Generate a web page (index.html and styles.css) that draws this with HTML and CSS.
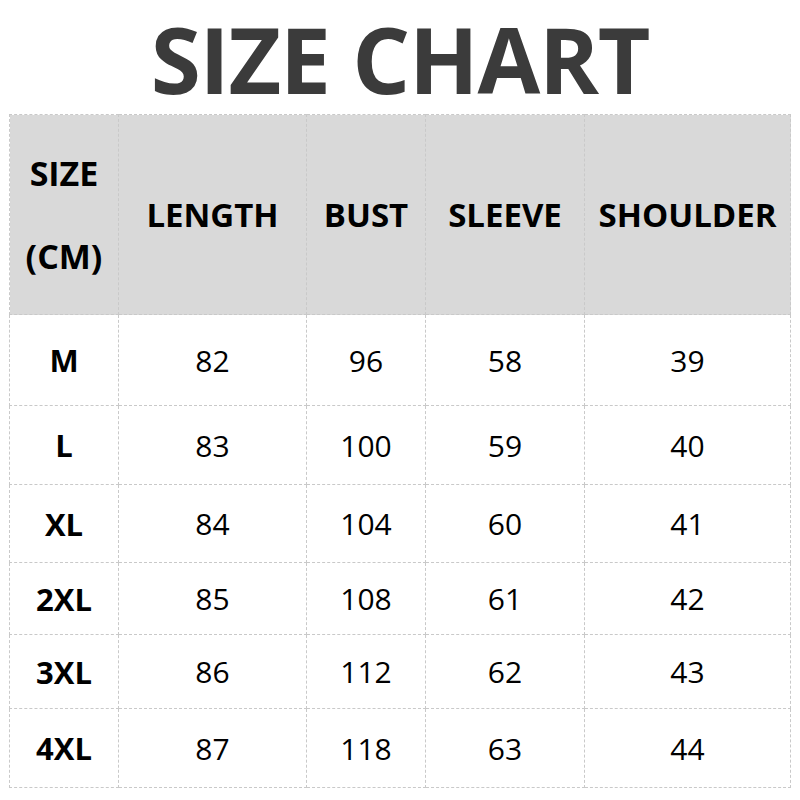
FILE: index.html
```html
<!DOCTYPE html>
<html>
<head>
<meta charset="utf-8">
<link rel="stylesheet" href="styles.css">
</head>
<body>
<div class="page">
  <h1 class="title">SIZE CHART</h1>
  <table class="chart">
    <colgroup>
      <col class="c1"><col class="c2"><col class="c3"><col class="c4"><col class="c5">
    </colgroup>
    <thead>
      <tr class="head">
        <th class="size-head"><span class="line">SIZE</span><span class="line">(CM)</span></th>
        <th>LENGTH</th>
        <th>BUST</th>
        <th>SLEEVE</th>
        <th>SHOULDER</th>
      </tr>
    </thead>
    <tbody>
      <tr class="r1"><td class="size">M</td><td>82</td><td>96</td><td>58</td><td>39</td></tr>
      <tr class="r2"><td class="size">L</td><td>83</td><td>100</td><td>59</td><td>40</td></tr>
      <tr class="r3"><td class="size">XL</td><td>84</td><td>104</td><td>60</td><td>41</td></tr>
      <tr class="r4"><td class="size">2XL</td><td>85</td><td>108</td><td>61</td><td>42</td></tr>
      <tr class="r5"><td class="size">3XL</td><td>86</td><td>112</td><td>62</td><td>43</td></tr>
      <tr class="r6"><td class="size">4XL</td><td>87</td><td>118</td><td>63</td><td>44</td></tr>
    </tbody>
  </table>
</div>
</body>
</html>
```

FILE: styles.css
```css
html, body {
  margin: 0;
  padding: 0;
  background: #ffffff;
}

.page {
  width: 800px;
  height: 800px;
  padding-top: 4px;
  box-sizing: border-box;
}

.title {
  margin: 0;
  font-family: "Open Sans", "Noto Sans", sans-serif;
  font-weight: 700;
  font-size: 91px;
  line-height: 110px;
  color: #3b3b3b;
  text-align: center;
  letter-spacing: -1.2px;
}

.chart {
  margin: 0 0 0 9px;
  width: 781px;
  border-collapse: collapse;
  table-layout: fixed;
  font-family: "Open Sans", "Noto Sans", sans-serif;
  color: #000;
}

.c1 { width: 109px; }
.c2 { width: 188px; }
.c3 { width: 119px; }
.c4 { width: 159px; }
.c5 { width: 206px; }

.chart th,
.chart td {
  border: 1px dashed #c9c9c9;
  padding: 0;
  text-align: center;
  vertical-align: middle;
}

.head th {
  background: #d9d9d9;
  height: 199px;
  font-weight: 700;
  font-size: 33px;
}

.size-head .line {
  display: block;
  line-height: 83px;
  font-size: 34px;
}

.chart td {
  font-size: 30px;
  font-weight: 400;
}

.chart td.size {
  font-weight: 700;
  font-size: 31px;
}

.r1 td { height: 90px; }
.r2 td { height: 78px; }
.r3 td { height: 77px; }
.r4 td { height: 71px; }
.r5 td { height: 73px; }
.r6 td { height: 78px; }
```
